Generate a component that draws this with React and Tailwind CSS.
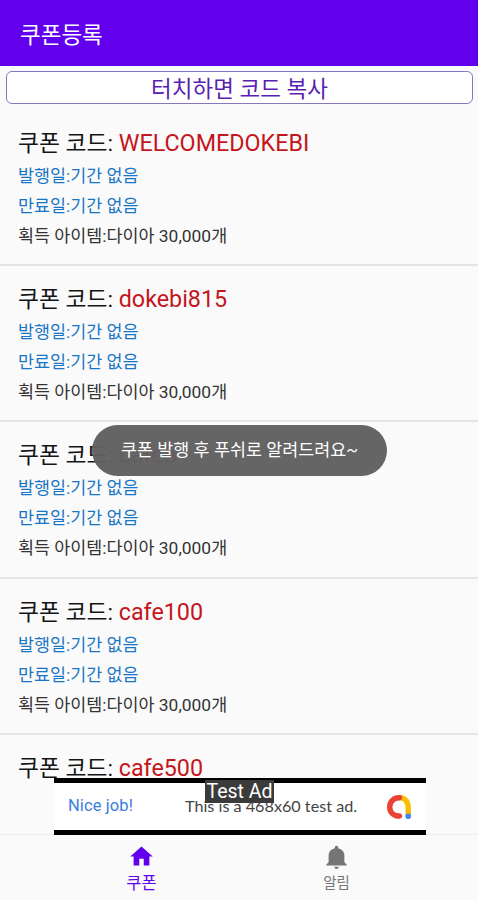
import { clsx } from "clsx";

const coupons = [
  { code: "WELCOMEDOKEBI" },
  { code: "dokebi815" },
  { code: "cafe5" },
  { code: "cafe100" },
];

function CouponTitle({ code }) {
  return (
    <h2 className="h-[32px] text-[22.8px] leading-[32px] text-[#151515]">
      쿠폰 코드: <span className="text-[23.3px] text-[#c4161c]">{code}</span>
    </h2>
  );
}

function CouponRow({ code }) {
  return (
    <li className="h-[156.33px] shrink-0 border-b-2 border-[#e4e4e4] pl-[18px] pt-[17px] whitespace-nowrap">
      <CouponTitle code={code} />
      <p className="mt-[2px] h-[30px] text-[17.4px] leading-[30px] text-[#1976c5]">발행일:기간 없음</p>
      <p className="h-[30px] text-[17.4px] leading-[30px] text-[#1976c5]">만료일:기간 없음</p>
      <p className="h-[30px] text-[17.4px] leading-[30px] text-[#333]">획득 아이템:다이아 30,000개</p>
    </li>
  );
}

function AdMobLogo() {
  return (
    <svg viewBox="0 0 24 24" className="h-6 w-6 overflow-visible" fill="none">
      <path d="M12 2.500c5.400 0 9.200 4 9.200 9.500v9" stroke="#fbbc04" strokeWidth="5.400" />
      <path d="M12.500 2.700C7 2.400 2.700 6.600 2.700 12s4.300 9.300 9.800 9" stroke="#ea4335" strokeWidth="5.400" strokeLinecap="round" />
      <circle cx="21.200" cy="21.200" r="2.800" fill="#4285f4" />
    </svg>
  );
}

function AdBanner() {
  return (
    <div className="absolute left-[54px] top-[778px] flex h-[57px] w-[372px] items-center border-y-[5px] border-black bg-white whitespace-nowrap">
      <span className="w-[131px] pl-[14px] font-[Roboto] text-[16.5px] tracking-[0.1px] text-[#3b7ddd]">Nice job!</span>
      <span className="font-[Lato] text-[16.2px] text-[#444]">This is a 468x60 test ad.</span>
      <span className="ml-auto mr-[15px]">
        <AdMobLogo />
      </span>
      <span className="absolute left-[151px] top-[-3px] h-[23px] w-[69px] bg-[#3b3b3b] text-center font-[Roboto] text-[19.5px] leading-[23px] text-white">
        Test Ad
      </span>
    </div>
  );
}

function NavItem({ label, active, children }) {
  return (
    <button
      className={clsx(
        "flex flex-1 flex-col items-center pt-[8px]",
        active ? "text-[#6200ee]" : "text-[#757575]"
      )}
    >
      <svg viewBox="0 0 24 24" className="h-[27px] w-[27px]" fill="currentColor">
        {children}
      </svg>
      <span className={clsx("leading-[28px]", active ? "text-[16.5px]" : "text-[14.5px]")}>{label}</span>
    </button>
  );
}

export default function App() {
  return (
    <div className="relative flex h-[900px] w-[478px] flex-col overflow-hidden bg-[#fafafa] font-[Roboto,'Noto_Sans_CJK_KR',sans-serif]">
      <header className="flex h-[66px] shrink-0 items-center bg-[#6200ee] pl-[20px] pt-[5px]">
        <h1 className="text-[22.5px] text-white">쿠폰등록</h1>
      </header>

      <main className="flex min-h-0 flex-1 flex-col">
        <button className="ml-[6px] mr-[5px] mt-[5px] flex h-[33px] shrink-0 items-center justify-center rounded-[6px] border-[1.5px] border-[#8578bd] bg-white pt-[3px] text-[22.5px] leading-none text-[#5a1fb0]">
          터치하면 코드 복사
        </button>
        <ul className="mt-[5.6px] flex flex-col">
          {coupons.map((coupon) => (
            <CouponRow key={coupon.code} code={coupon.code} />
          ))}
          <li className="shrink-0 pl-[18px] pt-[17px] whitespace-nowrap">
            <CouponTitle code="cafe500" />
          </li>
        </ul>
      </main>

      <nav className="flex h-[66px] shrink-0 border-t border-[#eeeeee] bg-[#fafafa] px-[44px]">
        <NavItem label="쿠폰" active>
          <path d="M10 20v-6h4v6h5v-8h3L12 3 2 12h3v8z" />
        </NavItem>
        <NavItem label="알림">
          <path d="M12 23c1.100 0 2-.9 2-2h-4c0 1.100.89 2 2 2zm7-6v-6c0-3.070-2.140-5.640-5.500-6.320V4c0-.83-.67-1.500-1.500-1.500s-1.500.67-1.500 1.500v.68C7.130 5.360 5 7.920 5 11v6l-2 2v1h18v-1l-2-2z" />
        </NavItem>
      </nav>

      <AdBanner />

      <div className="absolute left-[92px] top-[425px] flex h-[51px] w-[295px] items-center justify-center rounded-full bg-[#606060]/97 text-[17.4px] text-white whitespace-nowrap">
        쿠폰 발행 후 푸쉬로 알려드려요~
      </div>
    </div>
  );
}
